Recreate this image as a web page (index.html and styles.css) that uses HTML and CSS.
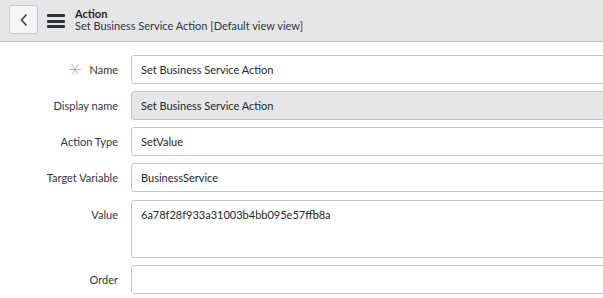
FILE: index.html
```html
<!DOCTYPE html>
<html lang="en">
<head>
    <meta charset="UTF-8">
    <title>Action - Set Business Service Action</title>
    <link rel="stylesheet" href="styles.css">
</head>
<body>
    <div class="form-header">
        <button class="back-btn" aria-label="Back">
            <svg width="10" height="14" viewBox="0 0 10 14"><path d="M7.5 1.5 L2.5 7 L7.5 12.5" fill="none" stroke="#333" stroke-width="1.4"/></svg>
        </button>
        <div class="menu-icon">
            <span></span><span></span><span></span>
        </div>
        <div class="header-titles">
            <div class="header-title">Action</div>
            <div class="header-subtitle">Set Business Service Action [Default view view]</div>
        </div>
    </div>

    <div class="form-body">
        <div class="form-row">
            <label class="form-label">
                <svg class="required" width="12" height="11" viewBox="0 0 12 11"><path d="M0 5.5 H12 M3 0.3 L9 10.7 M9 0.3 L3 10.7" stroke="#b3b6ba" stroke-width="1"/></svg>
                Name
            </label>
            <input class="form-input" type="text" value="Set Business Service Action">
        </div>
        <div class="form-row">
            <label class="form-label">Display name</label>
            <input class="form-input readonly" type="text" value="Set Business Service Action" readonly>
        </div>
        <div class="form-row">
            <label class="form-label">Action Type</label>
            <input class="form-input" type="text" value="SetValue">
        </div>
        <div class="form-row">
            <label class="form-label">Target Variable</label>
            <input class="form-input" type="text" value="BusinessService">
        </div>
        <div class="form-row value-row">
            <label class="form-label">Value</label>
            <textarea class="form-input form-textarea">6a78f28f933a31003b4bb095e57ffb8a</textarea>
        </div>
        <div class="form-row">
            <label class="form-label">Order</label>
            <input class="form-input" type="text" value="">
        </div>
    </div>
</body>
</html>
```

FILE: styles.css
```css
* {
    margin: 0;
    padding: 0;
    box-sizing: border-box;
}

body {
    font-family: "Lato", "Open Sans", Arial, sans-serif;
    background: white;
    color: #2f3740;
    width: 603px;
    overflow: hidden;
}

.form-header {
    height: 42px;
    background: #e5e6e8;
    border-bottom: 1px solid #c3c5c8;
    display: flex;
    align-items: flex-start;
    padding: 5px 0 0 9px;
}

.back-btn {
    flex: none;
    width: 29px;
    height: 29px;
    background: #f4f5f6;
    border: 1px solid #c8cacd;
    border-radius: 3px;
    display: flex;
    align-items: center;
    justify-content: center;
}

.menu-icon {
    flex: none;
    width: 18px;
    margin: 9px 0 0 9px;
    display: flex;
    flex-direction: column;
    gap: 2.5px;
}

.menu-icon span {
    height: 3px;
    background: #2e3338;
    border-radius: 1px;
}

.header-titles {
    margin: 3px 0 0 10px;
    line-height: 12px;
    white-space: nowrap;
}

.header-title {
    font-size: 11px;
    font-weight: bold;
    color: #1f2328;
}

.header-subtitle {
    font-size: 11px;
    color: #2f353b;
}

.form-body {
    padding-top: 13px;
    display: flex;
    flex-direction: column;
    gap: 7px;
}

.form-row {
    display: flex;
    align-items: flex-start;
}

.value-row {
    margin-top: 1px;
}

.form-label {
    flex: none;
    width: 131px;
    height: 29px;
    padding-right: 13px;
    font-size: 11px;
    color: #2f3740;
    display: flex;
    justify-content: flex-end;
    align-items: center;
    white-space: nowrap;
}

.required {
    margin-right: 8px;
}

.form-input {
    flex: none;
    width: 490px;
    height: 29px;
    border: 1px solid #c3c5c8;
    border-radius: 3px;
    padding: 0 9px;
    font-family: inherit;
    font-size: 11px;
    color: #23282e;
    background: white;
    outline: none;
}

.form-input.readonly {
    background: #e5e6e8;
}

.form-textarea {
    height: 58px;
    padding: 7px 9px;
    resize: none;
    line-height: 14px;
}
```
